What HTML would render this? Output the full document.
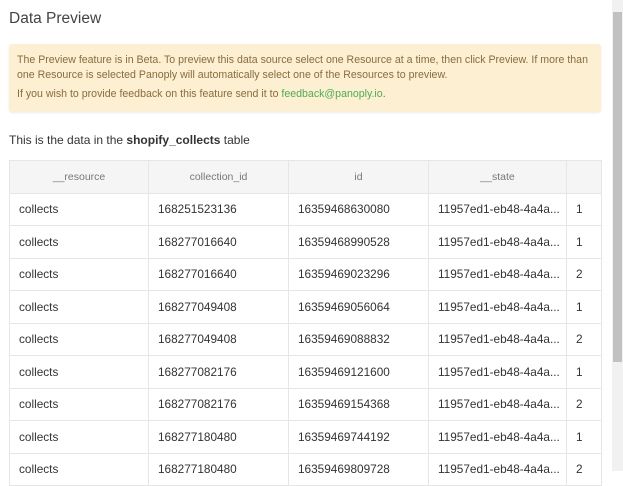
<!DOCTYPE html>
<html><head><style>
body{margin:0;width:623px;height:471px;overflow:hidden;background:#fff;font-family:"Liberation Sans",sans-serif;position:relative}
h1{position:absolute;left:9px;top:10px;margin:0;font-weight:normal;font-size:15.5px;color:#444}
.alert{position:absolute;left:9px;top:44px;width:592px;height:68px;background:#fcefd2;border-radius:3px;box-shadow:0 1px 2px rgba(0,0,0,.08);color:#8a6d3b;font-size:10.6px;line-height:15px;box-sizing:border-box;padding:9px 8px}
.alert p{margin:0}
.alert a{color:#4caf50;text-decoration:none}
.intro{position:absolute;left:9px;top:133px;font-size:12px;color:#333}
table{position:absolute;left:9px;top:160px;border-collapse:collapse;font-size:11.8px;color:#333;table-layout:fixed;width:592px}
td,th{border:1px solid #e6e6e6;height:31.5px;padding:0 9px;white-space:nowrap;overflow:hidden;text-align:left}
th{background:#f5f5f5;font-weight:normal;color:#777;text-align:center;font-size:10.5px}
.sb{position:absolute;right:0;top:0;width:11px;height:471px;background:#f1f1f1}
.th{position:absolute;left:1px;top:12px;width:9px;height:350px;background:#c1c1c1}
</style></head><body>
<h1>Data Preview</h1>
<div class="alert"><p>The Preview feature is in Beta. To preview this data source select one Resource at a time, then click Preview. If more than one Resource is selected Panoply will automatically select one of the Resources to preview.</p><p style="margin-top:4px">If you wish to provide feedback on this feature send it to <a>feedback@panoply.io</a>.</p></div>
<div class="intro">This is the data in the <b>shopify_collects</b> table</div>
<table>
<colgroup><col style="width:139px"><col style="width:140px"><col style="width:140px"><col style="width:138px"><col style="width:35px"></colgroup>
<tr><th>__resource</th><th>collection_id</th><th>id</th><th>__state</th><th></th></tr>
<tr><td>collects</td><td>168251523136</td><td>16359468630080</td><td>11957ed1-eb48-4a4a...</td><td>1</td></tr>
<tr><td>collects</td><td>168277016640</td><td>16359468990528</td><td>11957ed1-eb48-4a4a...</td><td>1</td></tr>
<tr><td>collects</td><td>168277016640</td><td>16359469023296</td><td>11957ed1-eb48-4a4a...</td><td>2</td></tr>
<tr><td>collects</td><td>168277049408</td><td>16359469056064</td><td>11957ed1-eb48-4a4a...</td><td>1</td></tr>
<tr><td>collects</td><td>168277049408</td><td>16359469088832</td><td>11957ed1-eb48-4a4a...</td><td>2</td></tr>
<tr><td>collects</td><td>168277082176</td><td>16359469121600</td><td>11957ed1-eb48-4a4a...</td><td>1</td></tr>
<tr><td>collects</td><td>168277082176</td><td>16359469154368</td><td>11957ed1-eb48-4a4a...</td><td>2</td></tr>
<tr><td>collects</td><td>168277180480</td><td>16359469744192</td><td>11957ed1-eb48-4a4a...</td><td>1</td></tr>
<tr><td>collects</td><td>168277180480</td><td>16359469809728</td><td>11957ed1-eb48-4a4a...</td><td>2</td></tr>
</table>
<div class="sb"><div class="th"></div></div>
</body></html>
